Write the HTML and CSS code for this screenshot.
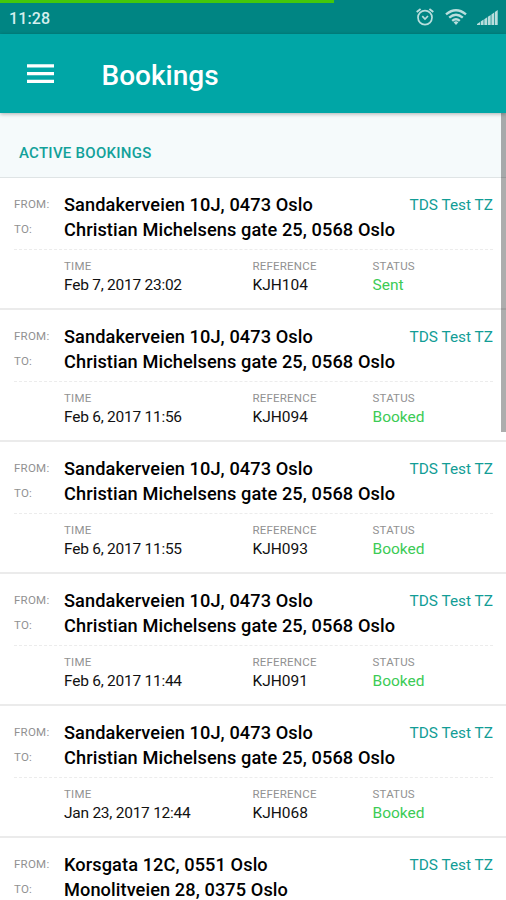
FILE: index.html
```html
<!DOCTYPE html>
<html lang="en">
<head>
<meta charset="utf-8">
<title>Bookings</title>
<link rel="stylesheet" href="styles.css">
</head>
<body>
<div class="app">
  <header class="statusbar">
    <span class="clock">11:28</span>
    <div class="status-icons">
      <svg class="alarm" width="18" height="18" viewBox="0 0 18 18" fill="none" stroke="currentColor"><circle cx="9" cy="9.6" r="7" stroke-width="1.7"/><path d="M6.3 8.2L9 11l3-3" stroke-width="1.7"/><path d="M.7 4.1L4.6 1M17.3 4.1L13.4 1" stroke-width="1.9"/></svg>
      <svg class="wifi" width="22" height="16" viewBox="0 0 22 16" fill="none" stroke="currentColor" stroke-width="2.4"><path d="M1 5.4Q11-2.8 21 5.4M4.2 8.7Q11 3 17.8 8.7M7.2 11.8Q11 8.5 14.8 11.8"/><path d="M8.6 13.2Q11 11.4 13.4 13.2L11 16z" fill="currentColor" stroke="none"/></svg>
      <svg class="signal" width="21" height="15" viewBox="0 0 21 15" fill="currentColor"><path d="M0 15v-1l3-2v3zM3.7 15v-3.6l2.9-1.8V15zM7.3 15V9.2l2.9-1.9V15zM10.9 15V6.8l2.8-1.8V15zM14.4 15V4.5L17.2 2.6V15zM17.9 15V2l2.8-2v15z"/></svg>
    </div>
    <div class="progress"></div>
  </header>
  <nav class="toolbar">
    <svg class="menu" width="27" height="20" viewBox="0 0 27 20" fill="#fff"><path d="M0 .2h27v3.3H0zM0 8h27v3.3H0zM0 15.8h27v3.3H0z"/></svg>
    <h1>Bookings</h1>
  </nav>
  <main>
    <h2>ACTIVE BOOKINGS</h2>
    <article class="booking">
      <div class="route">
        <span class="label">FROM:</span><strong>Sandakerveien 10J, 0473 Oslo</strong><span class="account">TDS Test TZ</span>
        <span class="label">TO:</span><strong>Christian Michelsens gate 25, 0568 Oslo</strong>
      </div>
      <dl><div><dt>TIME</dt><dd class="time">Feb 7, 2017 23:02</dd></div><div><dt>REFERENCE</dt><dd>KJH104</dd></div><div><dt>STATUS</dt><dd class="state">Sent</dd></div></dl>
    </article>
    <article class="booking">
      <div class="route">
        <span class="label">FROM:</span><strong>Sandakerveien 10J, 0473 Oslo</strong><span class="account">TDS Test TZ</span>
        <span class="label">TO:</span><strong>Christian Michelsens gate 25, 0568 Oslo</strong>
      </div>
      <dl><div><dt>TIME</dt><dd class="time">Feb 6, 2017 11:56</dd></div><div><dt>REFERENCE</dt><dd>KJH094</dd></div><div><dt>STATUS</dt><dd class="state">Booked</dd></div></dl>
    </article>
    <article class="booking">
      <div class="route">
        <span class="label">FROM:</span><strong>Sandakerveien 10J, 0473 Oslo</strong><span class="account">TDS Test TZ</span>
        <span class="label">TO:</span><strong>Christian Michelsens gate 25, 0568 Oslo</strong>
      </div>
      <dl><div><dt>TIME</dt><dd class="time">Feb 6, 2017 11:55</dd></div><div><dt>REFERENCE</dt><dd>KJH093</dd></div><div><dt>STATUS</dt><dd class="state">Booked</dd></div></dl>
    </article>
    <article class="booking">
      <div class="route">
        <span class="label">FROM:</span><strong>Sandakerveien 10J, 0473 Oslo</strong><span class="account">TDS Test TZ</span>
        <span class="label">TO:</span><strong>Christian Michelsens gate 25, 0568 Oslo</strong>
      </div>
      <dl><div><dt>TIME</dt><dd class="time">Feb 6, 2017 11:44</dd></div><div><dt>REFERENCE</dt><dd>KJH091</dd></div><div><dt>STATUS</dt><dd class="state">Booked</dd></div></dl>
    </article>
    <article class="booking">
      <div class="route">
        <span class="label">FROM:</span><strong>Sandakerveien 10J, 0473 Oslo</strong><span class="account">TDS Test TZ</span>
        <span class="label">TO:</span><strong>Christian Michelsens gate 25, 0568 Oslo</strong>
      </div>
      <dl><div><dt>TIME</dt><dd class="time">Jan 23, 2017 12:44</dd></div><div><dt>REFERENCE</dt><dd>KJH068</dd></div><div><dt>STATUS</dt><dd class="state">Booked</dd></div></dl>
    </article>
    <article class="booking">
      <div class="route">
        <span class="label">FROM:</span><strong>Korsgata 12C, 0551 Oslo</strong><span class="account">TDS Test TZ</span>
        <span class="label">TO:</span><strong>Monolitveien 28, 0375 Oslo</strong>
      </div>
    </article>
    <div class="scrollbar"></div>
  </main>
</div>
</body>
</html>
```
FILE: styles.css
```css
* { box-sizing: border-box; }
body { margin: 0; background: #fff; font-family: Roboto, "Liberation Sans", sans-serif; }
.app { height: 900px; overflow: hidden; display: flex; flex-direction: column; }
.statusbar { position: relative; height: 34px; flex: none; display: flex; justify-content: space-between; align-items: flex-start; padding: 8px 8px 0 9px; background: #008583; color: #b9dedd; }
.progress { position: absolute; left: 0; top: 0; width: 334px; height: 3px; background: #43c80b; }
.clock { margin-top: 1px; font-size: 16px; line-height: 20px; font-weight: 500; letter-spacing: .1px; color: #d5efee; }
.status-icons { display: flex; }
.alarm { margin-right: 11px; }
.wifi { margin: 1px 10px 0 0; }
.signal { margin-top: 2px; }
.toolbar { height: 79px; flex: none; display: flex; align-items: center; padding-left: 26.5px; background: #00a6a6; box-shadow: 0 1px 4px rgba(0,0,0,.3); z-index: 1; }
.menu { margin-top: 1px; }
h1 { margin: 5px 0 0 48px; font-size: 28px; line-height: 36px; font-weight: 500; color: #fff; }
main { position: relative; flex: 1; min-height: 0; }
h2 { margin: 0; height: 65px; padding: 30px 0 0 19px; background: #f5fafb; border-bottom: 1px solid #dfe4e5; font-size: 15px; line-height: 20px; font-weight: 500; letter-spacing: .27px; color: #12a19a; }
.booking { height: 132.1px; padding: 13.5px 13px 0 14px; border-bottom: 2px solid #ebebeb; }
.route { display: grid; grid-template-columns: 50px 1fr auto; grid-template-rows: 25.5px 25.5px; line-height: 25.5px; height: 58px; border-bottom: 1px dashed #ececec; }
.label { font-size: 11.5px; letter-spacing: .25px; color: #919191; }
strong { font-size: 18.2px; font-weight: 500; letter-spacing: .09px; color: #000; white-space: nowrap; }
.account { padding-top: 1px; font-size: 15.4px; color: #129d96; }
dl { margin: 8px 0 0 50px; display: grid; grid-template-columns: 188.5px 120px 1fr; }
dt { font-size: 11.5px; line-height: 17px; letter-spacing: .2px; color: #919191; }
dd { margin: 0; font-size: 15.5px; line-height: 21.5px; color: #111; }
.time { letter-spacing: -.25px; }
.state { color: #3ccb55; }
.scrollbar { position: absolute; top: 0; right: 0; width: 5px; height: 319px; background: rgba(0,0,0,.32); }
```
